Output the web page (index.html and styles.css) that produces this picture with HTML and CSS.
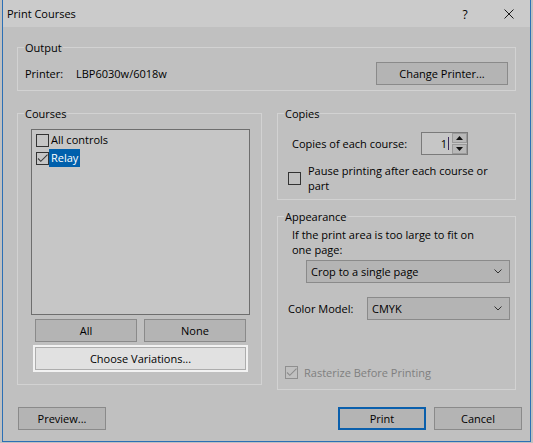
FILE: index.html
```html
<!DOCTYPE html>
<html>
<head>
<meta charset="utf-8">
<link rel="stylesheet" href="styles.css">
</head>
<body>
<div class="window">
  <div class="titlebar">
    <span class="title">Print Courses</span>
    <span class="tbtn help">?</span>
    <span class="tbtn close"><svg width="10" height="10" viewBox="0 0 10 10"><path d="M0.5 0.5 L9.5 9.5 M9.5 0.5 L0.5 9.5" stroke="#1a1a1a" stroke-width="1" fill="none"/></svg></span>
  </div>
  <div class="content">
    <fieldset class="group output">
      <legend>Output</legend>
      <div class="gbody printer-row">
        <span class="plabel">Printer:</span>
        <span class="pname">LBP6030w/6018w</span>
        <button class="btn change">Change Printer...</button>
      </div>
    </fieldset>

    <div class="columns">
      <fieldset class="group courses">
        <legend>Courses</legend>
        <div class="gbody">
          <div class="listbox">
            <div class="item"><span class="cb"></span><span class="itext">All controls</span></div>
            <div class="item selected"><span class="cb"><svg width="13" height="13" viewBox="0 0 13 13"><path d="M2 6.5 L4.8 9.3 L11.5 2.6" stroke="#3a3a3a" stroke-width="1.1" fill="none"/></svg></span><span class="itext">Relay</span></div>
          </div>
          <div class="two-btns">
            <button class="btn half">All</button>
            <button class="btn half">None</button>
          </div>
          <button class="btn choose">Choose Variations...</button>
        </div>
      </fieldset>

      <div class="rightcol">
        <fieldset class="group copies">
          <legend>Copies</legend>
          <div class="gbody">
            <div class="spinrow">
              <span class="spinlabel">Copies of each course:</span>
              <div class="spin">
                <span class="spinval">1<span class="caret"></span></span>
                <div class="spinbtns">
                  <span class="sb"><svg width="7" height="4" viewBox="0 0 7 4"><path d="M0 4 L3.5 0 L7 4 Z" fill="#111"/></svg></span>
                  <span class="sb"><svg width="7" height="4" viewBox="0 0 7 4"><path d="M0 0 L3.5 4 L7 0 Z" fill="#111"/></svg></span>
                </div>
              </div>
            </div>
            <div class="pauserow">
              <span class="cb"></span>
              <span class="ptext">Pause printing after each course or part</span>
            </div>
          </div>
        </fieldset>

        <fieldset class="group appearance">
          <legend>Appearance</legend>
          <div class="gbody">
            <div class="fittext">If the print area is too large to fit on one page:</div>
            <div class="select sel1"><span class="selval">Crop to a single page</span><svg class="chev" width="8" height="5" viewBox="0 0 8 5"><path d="M0.5 0.5 L4 4 L7.5 0.5" stroke="#333" stroke-width="1" fill="none"/></svg></div>
            <div class="colorrow">
              <span class="clabel">Color Model:</span>
              <div class="select sel2"><span class="selval">CMYK</span><svg class="chev" width="8" height="5" viewBox="0 0 8 5"><path d="M0.5 0.5 L4 4 L7.5 0.5" stroke="#333" stroke-width="1" fill="none"/></svg></div>
            </div>
            <div class="rasterrow">
              <span class="cb disabled"><svg width="13" height="13" viewBox="0 0 13 13"><path d="M2 6.5 L4.8 9.3 L11.5 2.6" stroke="#8c8c8c" stroke-width="1.1" fill="none"/></svg></span>
              <span class="rtext">Rasterize Before Printing</span>
            </div>
          </div>
        </fieldset>
      </div>
    </div>

    <div class="footer">
      <button class="btn fbtn">Preview...</button>
      <span class="spacer"></span>
      <button class="btn fbtn primary">Print</button>
      <button class="btn fbtn">Cancel</button>
    </div>
  </div>
</div>
</body>
</html>
```

FILE: styles.css
```css
html, body {
  margin: 0;
  padding: 0;
  background: #c0c0c0;
}

body {
  font-family: "Segoe UI", "Open Sans", "Liberation Sans", sans-serif;
  font-size: 11px;
  color: #000;
}

.window {
  box-sizing: border-box;
  width: 529px;
  height: 442px;
  margin-left: 2px;
  border: 1px solid #2b6fb5;
  border-top: none;
  background: #c0c0c0;
  display: flex;
  flex-direction: column;
}

.titlebar {
  height: 27px;
  background: #cbcbcb;
  display: flex;
  align-items: center;
  padding-left: 4px;
}

.title {
  flex: 1;
  font-size: 11px;
  line-height: 15px;
}

.tbtn {
  display: flex;
  align-items: center;
  justify-content: center;
  height: 27px;
}

.help {
  width: 46px;
  font-size: 12px;
  padding-top: 1px;
}

.close {
  width: 42px;
}

.content {
  display: flex;
  flex-direction: column;
}

.btn {
  box-sizing: border-box;
  height: 23px;
  border: 1px solid #8a8a8a;
  background: #b4b4b4;
  font-family: inherit;
  font-size: 11px;
  color: #000;
  padding: 0;
  margin: 0;
  line-height: 19px;
}

.group {
  margin: 0;
  padding: 0;
  border: 1px solid #d2d2d2;
  min-width: 0;
}

.group legend {
  margin-left: 6px;
  padding: 0 1px;
  line-height: 15px;
  font-size: 11px;
}

.output {
  margin: 13px 14px 0 14px;
}

.printer-row {
  display: flex;
  align-items: center;
  padding: 7px 7px 5px 7px;
}

.plabel {
  width: 51px;
}

.pname {
  flex: 1;
}

.change {
  width: 132px;
}

.columns {
  display: flex;
  align-items: flex-start;
  gap: 15px;
  margin: 15px 14px 0 14px;
}

.courses {
  width: 245px;
  box-sizing: border-box;
  flex: none;
}

.courses .gbody {
  padding: 8px 11px 14px 13px;
  display: flex;
  flex-direction: column;
}

.listbox {
  box-sizing: border-box;
  height: 186px;
  border: 1px solid #6e6e6e;
  background: #c6c6c6;
  padding: 1px 0 0 4px;
}

.item {
  display: flex;
  align-items: center;
  height: 18px;
}

.cb {
  box-sizing: border-box;
  width: 13px;
  height: 13px;
  border: 1px solid #333;
  flex: none;
}

.cb svg {
  display: block;
  margin: -1px;
}

.cb.disabled {
  border-color: #8f8f8f;
}

.itext {
  line-height: 18px;
  padding: 0 2px 0 2px;
}

.item.selected .itext {
  background: #0060ac;
  color: #fff;
}

.two-btns {
  display: flex;
  gap: 7px;
  margin: 4px 4px 0 4px;
}

.half {
  width: 102px;
}

.choose {
  margin: 5px 4px 0 4px;
  border-color: #adadad;
  background: #e1e1e1;
  box-shadow: 0 0 0 2px #f2f2f2;
}

.rightcol {
  flex: 1;
  display: flex;
  flex-direction: column;
  min-width: 0;
}

.copies .gbody {
  padding: 11px 4px 6px 10px;
}

.spinrow {
  display: flex;
  align-items: center;
  padding-left: 4px;
}

.spinlabel {
  width: 129px;
  flex: none;
}

.spin {
  box-sizing: border-box;
  width: 47px;
  height: 23px;
  border: 1px solid #7a7a7a;
  background: #c6c6c6;
  display: flex;
}

.spinval {
  flex: 1;
  line-height: 21px;
  padding-right: 3px;
  display: flex;
  justify-content: flex-end;
  align-items: center;
}

.caret {
  display: inline-block;
  width: 1px;
  height: 13px;
  background: #3a2a5a;
  margin-left: 1px;
}

.spinbtns {
  width: 15px;
  display: flex;
  flex-direction: column;
  gap: 1px;
}

.sb {
  flex: 1;
  box-sizing: border-box;
  border: 1px solid #9a9a9a;
  background: #b8b8b8;
  display: flex;
  align-items: center;
  justify-content: center;
}

.pauserow {
  display: flex;
  align-items: center;
  gap: 7px;
  margin-top: 8px;
}

.ptext {
  line-height: 15px;
}

.appearance {
  margin-top: 9px;
}

.appearance .gbody {
  padding: 3px 5px 9px 14px;
  display: flex;
  flex-direction: column;
}

.fittext {
  line-height: 15px;
  padding-right: 28px;
}

.select {
  box-sizing: border-box;
  height: 23px;
  border: 1px solid #8a8a8a;
  background: #b4b4b4;
  display: flex;
  align-items: center;
  padding-left: 4px;
}

.selval {
  flex: 1;
}

.chev {
  margin-right: 7px;
}

.sel1 {
  margin: 3px 0 0 14px;
}

.colorrow {
  display: flex;
  align-items: center;
  margin: 14px 0 0 -4px;
}

.clabel {
  width: 79px;
  flex: none;
}

.sel2 {
  flex: 1;
}

.rasterrow {
  display: flex;
  align-items: center;
  gap: 6px;
  margin: 45px 0 0 -7px;
  line-height: 15px;
}

.rtext {
  color: #7f7f7f;
}

.footer {
  display: flex;
  gap: 8px;
  margin-top: 17px;
  padding: 0 8px 0 15px;
}

.spacer {
  flex: 1;
}

.fbtn {
  width: 88px;
}

.primary {
  border: 2px solid #0a5fac;
}
```
